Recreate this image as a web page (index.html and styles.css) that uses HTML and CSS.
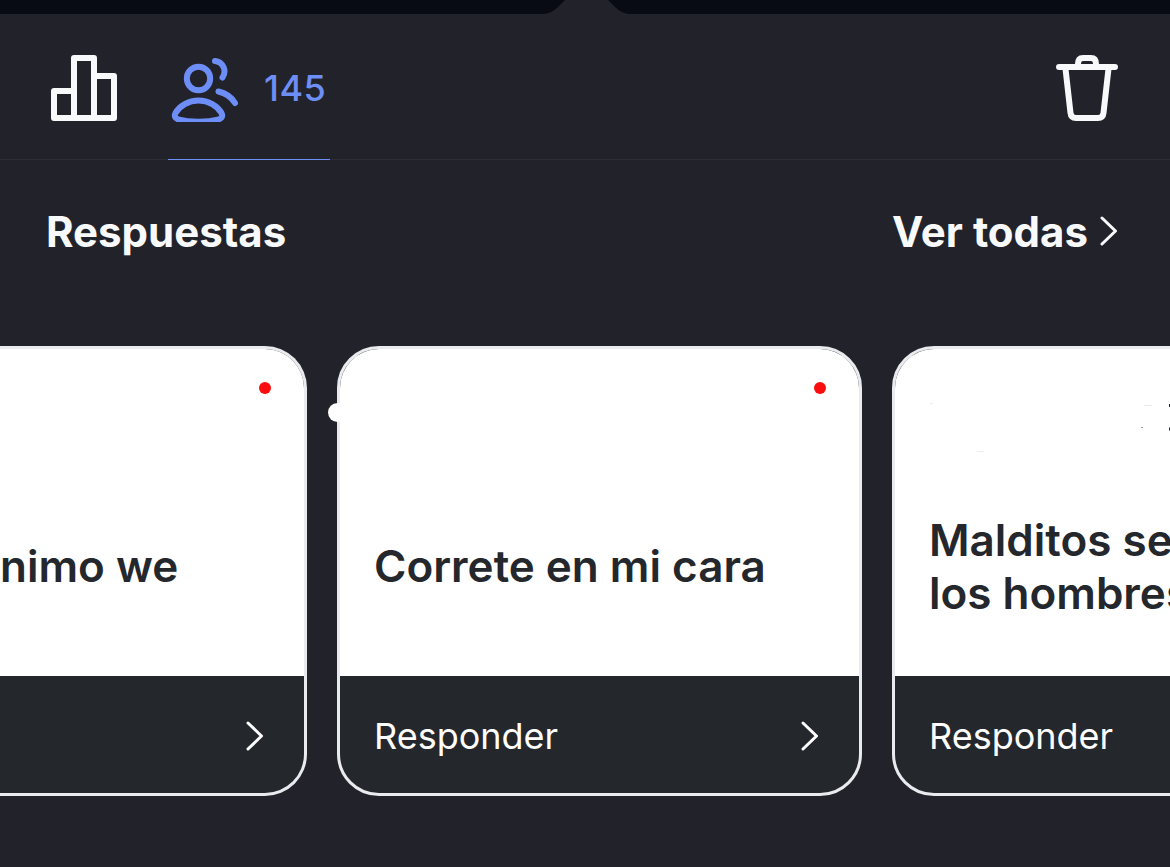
FILE: index.html
```
<!DOCTYPE html>
<html lang="es">
<head>
    <meta charset="UTF-8">
    <meta name="viewport" content="width=device-width, initial-scale=1.0">
    <title>Respuestas</title>
    <link rel="stylesheet" href="styles.css">
</head>
<body>
    <div class="screen">
        <svg class="notch" viewBox="0 0 1170 15">
            <path d="M0 0H565L558 7Q551 14 543 14H0Z M608 0H1170V14H630Q622 14 615 7Z"/>
        </svg>

        <div class="toolbar">
            <button class="tab" aria-label="Estadísticas">
                <svg class="icon" viewBox="0 0 68 68">
                    <path d="M4 37H24V64H4Z M24 4H44V64H24Z M44 22H64V64H44Z"/>
                </svg>
            </button>
            <button class="tab active" aria-label="Espectadores">
                <svg class="icon" viewBox="0 0 68 68">
                    <circle cx="27.5" cy="24.5" r="11.7"/>
                    <path d="M27.5 46.500C17.500 46.500 8.500 52 4.500 59C3 62 4 64.500 7 65.300C19 68.400 36 68.400 48 65.300C51 64.500 52 62 50.500 59C46.500 52 37.500 46.500 27.500 46.500Z M44 7A10.500 10.500 0 0 1 51.500 23.500 M47.500 37.500C54.500 39 60.500 43.500 64 49"/>
                </svg>
                <span class="count">145</span>
            </button>
            <button class="tab trash" aria-label="Eliminar">
                <svg class="icon" viewBox="0 0 68 68">
                    <path d="M7 13H63 M13.300 13L18.500 59Q19 64 24 64H46Q51 64 51.500 59L56.700 13 M26 13V10Q26 4 31 4H39Q44 4 44 10V13"/>
                </svg>
            </button>
        </div>

        <div class="section-header">
            <h2>Respuestas</h2>
            <a class="see-all">Ver todas
                <svg class="chevron" viewBox="0 0 18 30"><path d="M2 2L15.500 15L2 28"/></svg>
            </a>
        </div>

        <div class="cards">
            <div class="card card-first">
                <div class="card-body">
                    <span class="dot"></span>
                    <p>nimo we</p>
                </div>
                <div class="card-footer">
                    <svg class="chevron" viewBox="0 0 18 30"><path d="M2 2L15.500 15L2 28"/></svg>
                </div>
            </div>
            <div class="card">
                <span class="bump"></span>
                <div class="card-body">
                    <span class="dot"></span>
                    <p>Correte en mi cara</p>
                </div>
                <div class="card-footer">
                    <span>Responder</span>
                    <svg class="chevron" viewBox="0 0 18 30"><path d="M2 2L15.500 15L2 28"/></svg>
                </div>
            </div>
            <div class="card">
                <svg class="specks" viewBox="0 0 278 70">
                    <path class="faint" d="M38 1.500H41 M252 3.500H260 M85 49.500H92"/>
                    <path class="mid" d="M249 25.500H251"/>
                    <path class="dark" d="M277 3.500H278 M277 27H278"/>
                </svg>
                <div class="card-body">
                    <p>Malditos se<br>los hombres</p>
                </div>
                <div class="card-footer">
                    <span>Responder</span>
                </div>
            </div>
        </div>
    </div>
</body>
</html>
```
FILE: styles.css
```
* {
    margin: 0;
    padding: 0;
    box-sizing: border-box;
}

body {
    font-family: Inter, 'Liberation Sans', sans-serif;
    background: #22222a;
    color: #f8f9fa;
}

.screen {
    width: 1170px;
    height: 867px;
    overflow: hidden;
}

.notch {
    display: block;
    width: 1170px;
    height: 15px;
    fill: #080b14;
}

.toolbar {
    display: flex;
    height: 145px;
    padding: 0 50px 0 47px;
    border-bottom: 1px solid #2d2d35;
}

.tab {
    display: flex;
    align-items: center;
    height: 145px;
    padding: 0 3px;
    border: none;
    border-bottom: 1px solid transparent;
    background: none;
    color: #f8f9fa;
    font-family: inherit;
}

.tab.active {
    width: 162px;
    margin-left: 47px;
    color: #6e8ef7;
    border-bottom-color: #6e8ef7;
}

.trash {
    margin-left: auto;
    padding: 0;
}

.icon {
    flex: none;
    width: 68px;
    height: 68px;
    margin-top: 2px;
    fill: none;
    stroke: currentColor;
    stroke-width: 6;
    stroke-linecap: round;
    stroke-linejoin: round;
}

.count {
    margin: 2px 0 0 25px;
    font-size: 36px;
    font-weight: 500;
    letter-spacing: 0.5px;
}

.section-header {
    display: flex;
    justify-content: space-between;
    align-items: center;
    height: 142px;
    padding: 0 52px 0 46px;
    font-size: 42px;
    font-weight: 700;
}

h2 {
    font-size: 42px;
    font-weight: 700;
}

.see-all {
    display: flex;
    align-items: center;
}

.chevron {
    width: 18px;
    height: 30px;
    fill: none;
    stroke: currentColor;
    stroke-width: 3;
    stroke-linecap: round;
    stroke-linejoin: round;
}

.see-all .chevron {
    margin-left: 12px;
}

.cards {
    display: flex;
    gap: 30px;
    margin-top: 44px;
}

.card {
    position: relative;
    flex: none;
    width: 525px;
    height: 450px;
    border: 3px solid #e9ebee;
    border-radius: 42px;
    background: #24272c;
}

.card-body {
    position: relative;
    display: flex;
    align-items: center;
    height: 327px;
    padding: 108px 34px 0;
    border-radius: 39px 39px 0 0;
    background: #fff;
    color: #24272c;
    font-size: 44px;
    font-weight: 600;
    line-height: 53px;
    white-space: nowrap;
}

.card-footer {
    display: flex;
    justify-content: space-between;
    align-items: center;
    height: 117px;
    padding: 3px 40px 0 34px;
    color: #fff;
    font-size: 36px;
}

.card-footer .chevron {
    margin-left: auto;
}

/* scrolled past the left edge */
.card-first {
    width: 307px;
    border-left: none;
    border-radius: 0 42px 42px 0;
}

.card-first .card-body {
    padding-left: 0;
    border-radius: 0 39px 0 0;
}

.dot {
    position: absolute;
    top: 33px;
    right: 33px;
    width: 12px;
    height: 12px;
    border-radius: 50%;
    background: #f90d0d;
}

.bump {
    position: absolute;
    z-index: 1;
    top: 54px;
    left: -12px;
    width: 20px;
    height: 19px;
    border-radius: 10px;
    background: #fff;
}

.specks {
    position: absolute;
    z-index: 1;
    top: 53px;
    left: -3px;
    width: 278px;
    height: 70px;
}

.faint {
    stroke: #ececec;
}

.mid {
    stroke: #999;
}

.dark {
    stroke: #24272c;
    stroke-width: 3;
}
```
